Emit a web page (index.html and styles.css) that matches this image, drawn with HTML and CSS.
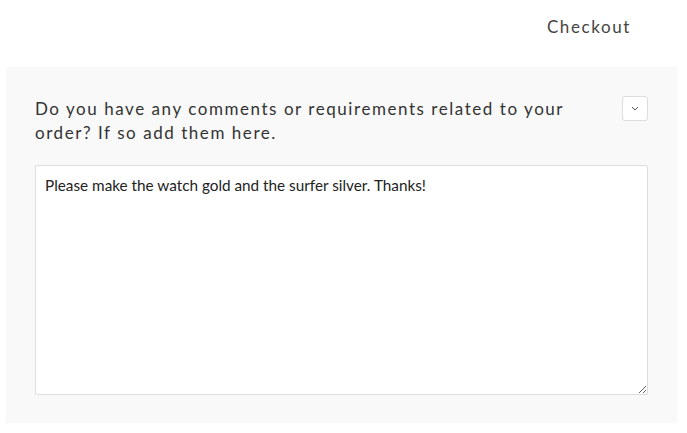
FILE: index.html
```html
<!DOCTYPE html>
<html>
<head>
<meta charset="utf-8">
<link rel="stylesheet" href="styles.css">
</head>
<body>
<header class="top">
  <span class="checkout">Checkout</span>
</header>
<section class="panel">
  <div class="panel-head">
    <h2 class="question">Do you have any comments or requirements related to your order? If so add them here.</h2>
    <button class="toggle" type="button" aria-label="Toggle">
      <svg width="8" height="5" viewBox="0 0 8 5"><path d="M1 1 L4 4 L7 1" fill="none" stroke="#555" stroke-width="1"/></svg>
    </button>
  </div>
  <textarea class="notes">Please make the watch gold and the surfer silver. Thanks!</textarea>
</section>
</body>
</html>
```
FILE: styles.css
```css
html, body {
  margin: 0;
  padding: 0;
  background: #ffffff;
  font-family: "Lato", "Open Sans", sans-serif;
  color: #333;
}
body {
  padding: 0 10px 0 6px;
}
.top {
  height: 67px;
  display: flex;
  justify-content: flex-end;
  align-items: flex-start;
}
.checkout {
  margin-top: 16px;
  margin-right: 46px;
  font-size: 17px;
  letter-spacing: 1.6px;
  color: #444;
  line-height: 22px;
}
.panel {
  background: #f9f9f9;
  padding: 30px 29px 28px 29px;
  height: 298px;
}
.panel-head {
  display: flex;
  justify-content: space-between;
  align-items: flex-start;
}
.question {
  margin: 0;
  font-weight: 400;
  font-size: 17px;
  line-height: 24px;
  letter-spacing: 1.55px;
  color: #333;
  width: 560px;
}
.toggle {
  width: 26px;
  height: 25px;
  margin-top: -1px;
  padding: 0;
  border: 1px solid #ddd;
  border-radius: 3px;
  background: #fff;
  display: flex;
  align-items: center;
  justify-content: center;
}
.notes {
  display: block;
  box-sizing: border-box;
  margin-top: 20px;
  width: 613px;
  height: 230px;
  padding: 10px 9px;
  border: 1px solid #ddd;
  border-radius: 2px;
  background: #fff;
  font-family: "Lato", "Open Sans", sans-serif;
  font-size: 15.3px;
  color: #222;
  resize: vertical;
}
```
